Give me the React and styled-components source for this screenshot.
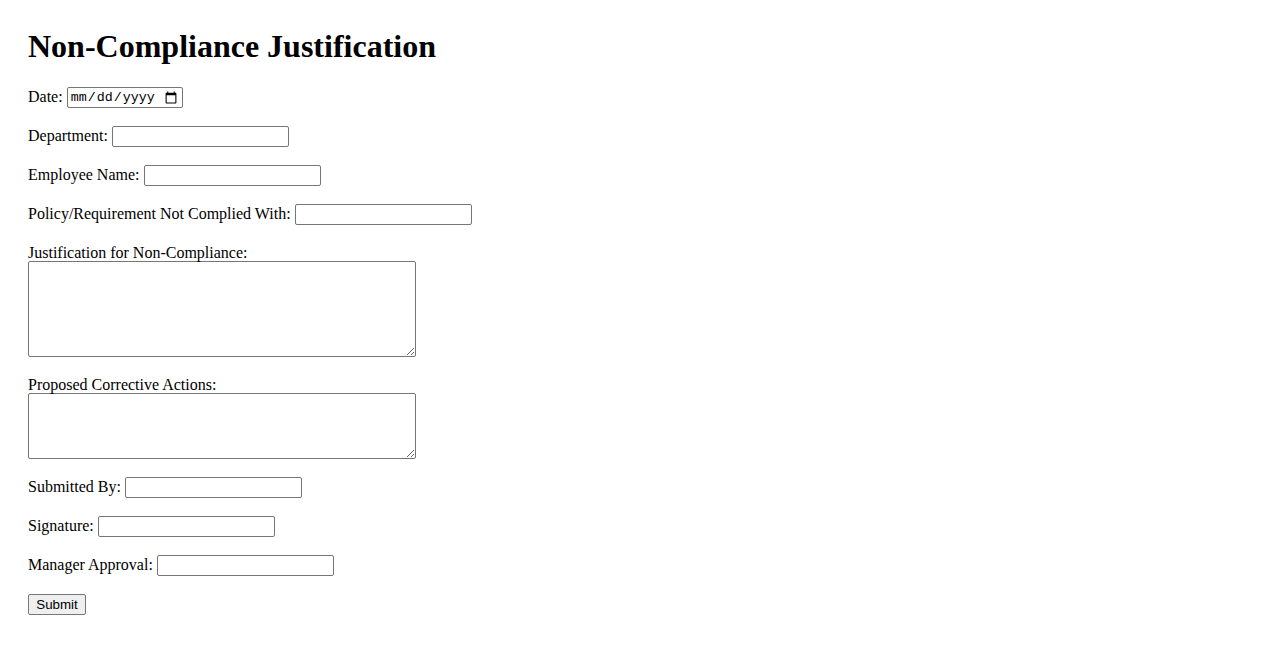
import React from 'react';
import styled, { createGlobalStyle } from 'styled-components';

const GlobalStyle = createGlobalStyle`
  body {
    margin: 0;
    background: #ffffff;
    color: #000000;
    font-family: 'Liberation Serif', 'Times New Roman', serif;
    font-size: 16px;
  }
`

const Page = styled.div`
  padding: 28px;
`

const Title = styled.h1`
  font-size: 32px;
  font-weight: bold;
  margin: 0 0 22px;
  line-height: 37px;
`

const Form = styled.form`
  display: flex;
  flex-direction: column;
  align-items: flex-start;
  gap: 18px;
`

const Row = styled.div`
  display: flex;
  align-items: flex-start;
  gap: 4px;
  label {
    line-height: 19px;
  }
`

const Stack = styled.div`
  display: flex;
  flex-direction: column;
  label {
    line-height: 18px;
    position: relative;
    top: 1px;
  }
`

const Input = styled.input`
  box-sizing: border-box;
  width: ${p => p.$width || 177}px;
  height: 21px;
  padding: 1px 2px;
  border: 1px solid #767676;
  border-radius: 2px;
  background: #ffffff;
  font-family: ${p => p.type === 'date' ? "'Liberation Mono', monospace" : "'Liberation Sans', Arial, sans-serif"};
  font-size: 13.333px;
  color: #000000;
`

const TextArea = styled.textarea`
  box-sizing: border-box;
  display: block;
  width: 388px;
  height: ${p => p.$height}px;
  padding: 2px;
  border: 1px solid #767676;
  border-radius: 2px;
  font-family: 'Liberation Mono', monospace;
  font-size: 13.333px;
`

const Button = styled.button`
  box-sizing: border-box;
  width: 58px;
  height: 21px;
  padding: 1px 6px;
  border: 1px solid #767676;
  border-radius: 2px;
  background: #efefef;
  font-family: 'Liberation Sans', Arial, sans-serif;
  font-size: 13.333px;
  color: #000000;
  cursor: pointer;
`

const fields = [
  ['department', 'Department:'],
  ['employee', 'Employee Name:'],
  ['policy', 'Policy/Requirement Not Complied With:'],
]

const signoff = [
  ['submittedBy', 'Submitted By:'],
  ['signature', 'Signature:'],
  ['manager', 'Manager Approval:'],
]

export default function App() {
  return (
    <Page>
      <GlobalStyle />
      <Title>Non-Compliance Justification</Title>
      <Form onSubmit={e => e.preventDefault()}>
        <Row>
          <label htmlFor="date">Date:</label>
          <Input type="date" id="date" $width={116} />
        </Row>
        {fields.map(([id, text]) => (
          <Row key={id}>
            <label htmlFor={id}>{text}</label>
            <Input type="text" id={id} />
          </Row>
        ))}
        <Stack>
          <label htmlFor="justification">Justification for Non-Compliance:</label>
          <TextArea id="justification" $height={96} />
        </Stack>
        <Stack>
          <label htmlFor="actions">Proposed Corrective Actions:</label>
          <TextArea id="actions" $height={66} />
        </Stack>
        {signoff.map(([id, text]) => (
          <Row key={id}>
            <label htmlFor={id}>{text}</label>
            <Input type="text" id={id} />
          </Row>
        ))}
        <Button type="submit">Submit</Button>
      </Form>
    </Page>
  )
}
